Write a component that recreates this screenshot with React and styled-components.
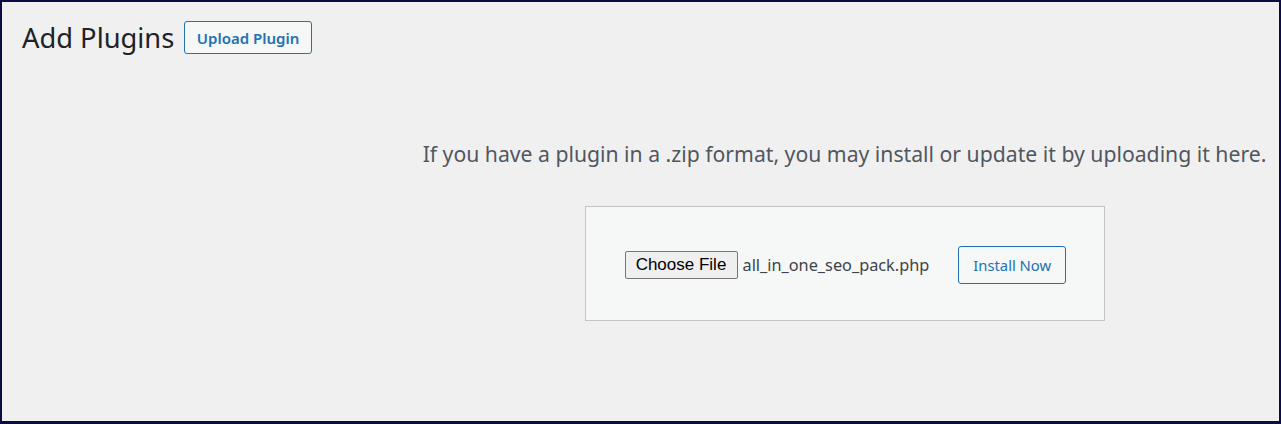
import React from "react";
import styled, { createGlobalStyle } from "styled-components";

const Global = createGlobalStyle`
  html, body { margin: 0; padding: 0; }
  body { background: #f0f0f1; font-family: "Noto Sans", "Open Sans", sans-serif; }
  * { box-sizing: border-box; }
`;

const Frame = styled.div`
  width: 1281px;
  height: 424px;
  background: #f0f0f1;
  border: 2px solid #0b0b45;
  border-bottom-width: 3px;
  display: flex;
  flex-direction: column;
`;

const Header = styled.div`
  display: flex;
  align-items: center;
  gap: 10px;
  padding: 18px 0 0 20px;
`;

const Title = styled.h1`
  margin: 0;
  font-size: 27.3px;
  font-weight: 400;
  color: #1d2327;
  line-height: 1.3;
`;

const OutlineButton = styled.button`
  display: inline-flex;
  align-items: center;
  justify-content: center;
  height: ${(p) => p.$h}px;
  padding: 0 ${(p) => p.$px}px;
  background: #f6f7f7;
  border: 1px solid #2271b1;
  border-radius: 3px;
  color: #2271b1;
  font-family: inherit;
  font-size: ${(p) => p.$fs}px;
  font-weight: ${(p) => p.$fw};
  white-space: nowrap;
  cursor: pointer;
`;

const Upload = styled.div`
  margin-left: 408px;
  display: flex;
  flex-direction: column;
  align-items: center;
  padding-top: 84px;
`;

const Help = styled.p`
  margin: 0;
  font-size: 21.2px;
  line-height: 30px;
  color: #50575e;
  text-align: center;
  white-space: nowrap;
`;

const FormBox = styled.div`
  margin-top: 37px;
  width: 520px;
  height: 115px;
  background: #f6f7f7;
  border: 1px solid #c3c4c7;
  display: flex;
  align-items: center;
  padding: 2px 0 0 39px;
`;

const FileButton = styled.button`
  height: 28px;
  width: 113px;
  padding: 0;
  background: #efefef;
  border: 1px solid #767676;
  border-radius: 2px;
  font-family: "Liberation Sans", Arial, sans-serif;
  font-size: 17px;
  color: #000;
`;

const FileName = styled.span`
  margin-left: 5px;
  margin-right: 29px;
  font-size: 16.3px;
  color: #3c434a;
`;

export default function App() {
  return (
    <>
      <Global />
      <Frame>
        <Header>
          <Title>Add Plugins</Title>
          <OutlineButton $h={33} $px={11.5} $fs={15} $fw={600}>
            Upload Plugin
          </OutlineButton>
        </Header>
        <Upload>
          <Help>
            If you have a plugin in a .zip format, you may install or update it by uploading it here.
          </Help>
          <FormBox>
            <FileButton>Choose File</FileButton>
            <FileName>all_in_one_seo_pack.php</FileName>
            <OutlineButton $h={38} $px={14} $fs={14.8} $fw={400}>
              Install Now
            </OutlineButton>
          </FormBox>
        </Upload>
      </Frame>
    </>
  );
}
